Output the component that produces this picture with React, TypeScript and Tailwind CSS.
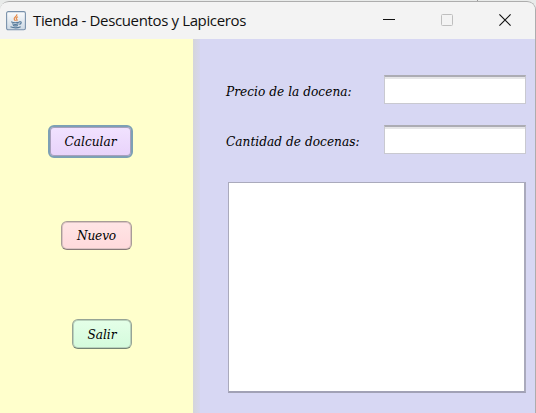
import React from "react";

const serif = "font-['DejaVu_Serif_Condensed','DejaVu_Serif',serif] italic text-black whitespace-nowrap [font-stretch:condensed]";

function JavaIcon() {
  return (
    <svg className="block shrink-0" width="20" height="20" viewBox="0 0 20 20" fill="none">
      <defs>
        <linearGradient id="tile" x1="0" y1="0" x2="0" y2="1">
          <stop offset="0" stopColor="#fbfcfd" />
          <stop offset="1" stopColor="#ccd8e4" />
        </linearGradient>
      </defs>
      <rect x="0.6" y="0.6" width="18.8" height="18.2" rx="1.6" fill="url(#tile)" stroke="#7890aa" strokeWidth="1.1" />
      <path d="M10.8 3.2c.8 2-3 2.8-2.6 4.7.1.9.9 1.3 1.2 2.1M12 5.7c-1.7.9-2.3 1.8-1.2 2.8.5.6.2 1.2-.3 1.5" stroke="#e58a49" strokeWidth="1.2" />
      <path d="M5.2 10.8c2 1 6 .9 8.3.1M6.1 12.8c2 .8 4.7.8 6.5 0M6.9 14.4c1.7.6 3.5.6 5 0M4.5 15.8c3 1.2 7.5 1.1 10.2-.1M13.2 10.9c2.8-.8 2.5 1.9.1 2.5" stroke="#557999" strokeWidth="1.1" />
    </svg>
  );
}

function TitleBar() {
  return (
    <header className="flex h-[35px] shrink-0 items-center bg-[#f3f3f3] pl-[6px] pr-[24px]">
      <JavaIcon />
      <h1 className="mb-[2px] ml-[7px] w-[213px] whitespace-nowrap font-['Open_Sans','Noto_Sans',sans-serif] text-[15px] leading-5 tracking-[-0.36px] text-[#111]">
        Tienda - Descuentos y Lapiceros
      </h1>
      <div className="mb-[2px] ml-auto flex items-center gap-[46px]">
        <svg width="12" height="12" viewBox="0 0 12 12"><path d="M0 5.5h12" stroke="#111" /></svg>
        <svg width="12" height="12" viewBox="0 0 12 12"><rect x=".5" y=".5" width="11" height="11" rx="1" fill="none" stroke="#bebebe" /></svg>
        <svg width="12" height="12" viewBox="0 0 12 12"><path d="M.4.4l11.2 11.2M11.6.4L.4 11.6" stroke="#111" strokeWidth="1.15" /></svg>
      </div>
    </header>
  );
}

function Field({ label, tracking }: { label: string; tracking: string }) {
  return (
    <label className="flex h-[30px] items-start justify-between">
      <span className={`${serif} ${tracking} pt-[6px] text-[13.5px] leading-5`}>{label}</span>
      <input className="h-[29px] w-[142px] border border-t-2 border-[#c9c9d0] border-t-[#acacb3] bg-white px-1 shadow-[inset_0_2px_0_#e6e6e8] outline-none" />
    </label>
  );
}

export default function App() {
  return (
    <div className="h-[413px] w-[536px] overflow-hidden bg-[#e9ebea]">
      <div className="flex h-px justify-end pr-[58px]"><span className="h-px w-px bg-[#999]" /></div>
      <div className="flex h-[412px] flex-col overflow-hidden rounded-t-[9px] border-r border-t border-[#adadad] bg-[#f3f3f3] pt-px">
        <TitleBar />
        <main className="mt-px flex min-h-0 flex-1">
          <aside className="flex w-[193px] flex-col items-end bg-[#ffffcc] pr-[61px] pt-[86px]">
            <button className={`${serif} -mr-px h-[33px] w-[85px] rounded-[6px] border-2 border-[#7da0b5] bg-linear-to-b from-[#f1e2ff] to-[#e8d3fa] text-[13.5px] tracking-[0.02px] shadow-[inset_0_0_0_1px_#a9a0bd]`}>Calcular</button>
            <button className={`${serif} mt-[63px] h-[29px] w-[71px] rounded-[6px] border-[1.5px] border-[#a89c98] border-b-[#877978] bg-linear-to-b from-[#ffe5e5] to-[#ffd9dc] text-[13.5px] tracking-[-0.15px] shadow-[inset_0_0_0_1px_#dcc3c3]`}>Nuevo</button>
            <button className={`${serif} mt-[69px] h-[30px] w-[60px] rounded-[6px] border-[1.5px] border-[#96a496] border-b-[#738373] bg-linear-to-b from-[#e4ffe8] to-[#d4fbdc] text-[13.5px] tracking-[-0.05px] shadow-[inset_0_0_0_1px_#b9d2bd]`}>Salir</button>
          </aside>
          <div className="w-[7px] bg-linear-to-r from-[#d4d5da] to-[#d6d6ed]" />
          <section className="flex flex-1 flex-col bg-[#d7d7f3] pl-[26px] pr-[9px] pt-[36px]">
            <Field label="Precio de la docena:" tracking="tracking-[0.03px]" />
            <div className="h-[20px]" />
            <Field label="Cantidad de docenas:" tracking="tracking-[0.03px]" />
            <textarea className="ml-[2px] mt-[27px] h-[211px] w-[298px] resize-none border border-b-2 border-r-2 border-[#aaaabc] border-b-[#a1a1b5] bg-white outline-none" />
          </section>
        </main>
      </div>
    </div>
  );
}
